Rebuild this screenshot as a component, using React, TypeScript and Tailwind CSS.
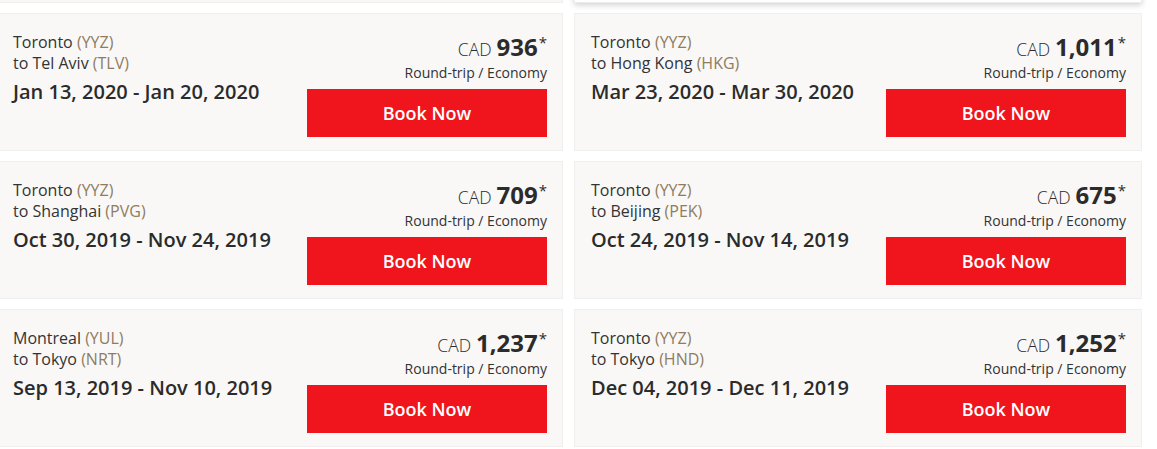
import React from "react";

type Deal = {
  from: string;
  fromCode: string;
  to: string;
  toCode: string;
  dates: string;
  price: string;
};

const deals: Deal[] = [
  { from: "Toronto", fromCode: "YYZ", to: "Tel Aviv", toCode: "TLV", dates: "Jan 13, 2020 - Jan 20, 2020", price: "936" },
  { from: "Toronto", fromCode: "YYZ", to: "Hong Kong", toCode: "HKG", dates: "Mar 23, 2020 - Mar 30, 2020", price: "1,011" },
  { from: "Toronto", fromCode: "YYZ", to: "Shanghai", toCode: "PVG", dates: "Oct 30, 2019 - Nov 24, 2019", price: "709" },
  { from: "Toronto", fromCode: "YYZ", to: "Beijing", toCode: "PEK", dates: "Oct 24, 2019 - Nov 14, 2019", price: "675" },
  { from: "Montreal", fromCode: "YUL", to: "Tokyo", toCode: "NRT", dates: "Sep 13, 2019 - Nov 10, 2019", price: "1,237" },
  { from: "Toronto", fromCode: "YYZ", to: "Tokyo", toCode: "HND", dates: "Dec 04, 2019 - Dec 11, 2019", price: "1,252" },
];

function Card({ d }: { d: Deal }) {
  return (
    <div className="h-[138px] flex justify-between pl-[16px] pr-[15px] pt-[18px] border bg-[#f9f8f7] border-[#f0efee]">
      <div className="flex flex-col">
        <div className="text-[16px] leading-[21px] text-[#333333]">
          {d.from} <span className="text-[#8f7c60]">({d.fromCode})</span>
        </div>
        <div className="text-[16px] leading-[21px] text-[#333333]">
          to {d.to} <span className="text-[#8f7c60]">({d.toCode})</span>
        </div>
        <div className="mt-[4px] text-[20px] leading-[28px] font-semibold text-[#2b2b2b]">
          {d.dates}
        </div>
      </div>
      <div className="flex flex-col items-end">
        <div className="h-[30px] leading-[30px] text-[#2b2b2b] whitespace-nowrap flex items-baseline">
          <span className="text-[17.5px] font-light mr-[5px]">CAD</span>
          <span className="text-[24px] font-bold">{d.price}</span>
          <span className="text-[15px] relative top-[-8px] ml-[1px] leading-none">*</span>
        </div>
        <div className="mt-[1px] text-[14px] leading-[20px] text-[#333333]">Round-trip / Economy</div>
        <button className="mt-[6px] w-[240px] h-[48px] bg-[#f0141c] text-white text-[18px] font-semibold">
          Book Now
        </button>
      </div>
    </div>
  );
}

export default function App() {
  return (
    <div
      className="w-[1157px] h-[449px] overflow-hidden bg-white"
      style={{ fontFamily: '"Open Sans", "Liberation Sans", sans-serif' }}
    >
      <div className="grid grid-cols-[567px_568px] gap-x-[11px] gap-y-[10px] ml-[-4px] mt-[-135px]">
        <div className="h-[138px] border bg-[#f9f8f7] border-[#f0efee]" />
        <div className="h-[138px] border bg-white border-[#ececec] shadow-[0_2px_6px_rgba(0,0,0,0.18)]" />
        {deals.map((d, i) => (
          <Card key={i} d={d} />
        ))}
      </div>
    </div>
  );
}
